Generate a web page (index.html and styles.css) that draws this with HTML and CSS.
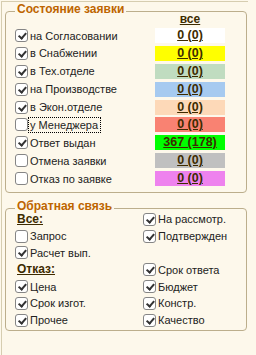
FILE: index.html
```html
<!DOCTYPE html>
<html lang="ru">
<head>
    <meta charset="UTF-8">
    <title>Состояние заявки</title>
    <link rel="stylesheet" href="styles.css">
</head>
<body>
    <div class="panel">
        <fieldset class="group">
            <legend>Состояние заявки</legend>
            <div class="state">
                <div></div>
                <div class="head">все</div>

                <label class="chk"><span class="box on"></span>на Согласовании</label>
                <div class="cnt white">0 (0)</div>

                <label class="chk"><span class="box on"></span>в Снабжении</label>
                <div class="cnt yellow">0 (0)</div>

                <label class="chk"><span class="box on"></span>в Тех.отделе</label>
                <div class="cnt sage">0 (0)</div>

                <label class="chk"><span class="box on"></span>на Производстве</label>
                <div class="cnt blue">0 (0)</div>

                <label class="chk"><span class="box on"></span>в Экон.отделе</label>
                <div class="cnt peach">0 (0)</div>

                <label class="chk"><span class="box"></span><span class="focus">у Менеджера</span></label>
                <div class="cnt salmon">0 (0)</div>

                <label class="chk"><span class="box on"></span>Ответ выдан</label>
                <div class="cnt green">367 (178)</div>

                <label class="chk"><span class="box"></span>Отмена заявки</label>
                <div class="cnt gray">0 (0)</div>

                <label class="chk"><span class="box"></span>Отказ по заявке</label>
                <div class="cnt violet">0 (0)</div>
            </div>
        </fieldset>

        <fieldset class="group">
            <legend>Обратная связь</legend>
            <div class="feedback">
                <div class="sub">Все:</div>
                <label class="chk"><span class="box on"></span>На рассмотр.</label>

                <label class="chk"><span class="box"></span>Запрос</label>
                <label class="chk"><span class="box on"></span>Подтвержден</label>

                <label class="chk"><span class="box on"></span>Расчет вып.</label>
                <div></div>

                <div class="sub">Отказ:</div>
                <label class="chk"><span class="box on"></span>Срок ответа</label>

                <label class="chk"><span class="box on"></span>Цена</label>
                <label class="chk"><span class="box on"></span>Бюджет</label>

                <label class="chk"><span class="box on"></span>Срок изгот.</label>
                <label class="chk"><span class="box on"></span>Констр.</label>

                <label class="chk"><span class="box on"></span>Прочее</label>
                <label class="chk"><span class="box on"></span>Качество</label>
            </div>
        </fieldset>
    </div>
</body>
</html>
```

FILE: styles.css
```css
body {
    margin: 0;
    background-color: #fdf8eb;
    font-family: "Liberation Sans", Arial, sans-serif;
    font-size: 11px;
    color: #222;
}

.panel {
    margin: 1px 0 0 1px;
    width: 247px;
    height: 354px;
    box-sizing: border-box;
    border-left: 1px solid #d6cdb0;
    border-top: 1px solid #d6cdb0;
    padding-left: 3px;
}

.group {
    width: 242px;
    box-sizing: border-box;
    margin: 0;
    padding: 0;
    min-width: 0;
    border: 1px solid #bcae8c;
    border-radius: 4px;
}

.group + .group {
    margin-top: 6px;
}

legend {
    margin-left: 9px;
    padding: 0 2px 5px;
    font-size: 12px;
    font-weight: bold;
    line-height: 14px;
    color: #bd6500;
}

/* состояние заявки */
.state {
    display: grid;
    grid-template-columns: 140px 70px;
    grid-template-rows: 15px;
    grid-auto-rows: 17.875px;
    margin-top: -8px;
    padding: 0 0 3px 9px;
}

.head {
    text-align: center;
    font-size: 12px;
    font-weight: bold;
    line-height: 12px;
    text-decoration: underline;
    color: #3d2b00;
}

.cnt {
    height: 15px;
    line-height: 15px;
    text-align: center;
    font-size: 12.5px;
    font-weight: bold;
    text-decoration: underline;
    color: #3d2b00;
}

.white { background: #ffffff; }
.yellow { background: #ffff00; }
.sage { background: #c0dcc0; }
.blue { background: #a6caf0; }
.peach { background: #fdd9b8; }
.salmon { background: #f98272; }
.green { background: #00ff00; }
.gray { background: #c0c0c0; }
.violet { background: #ee82ee; }

/* чекбоксы */
.chk {
    display: flex;
    align-items: center;
    height: 15px;
    white-space: nowrap;
}

.box {
    position: relative;
    flex: none;
    width: 11px;
    height: 11px;
    margin-right: 2px;
    border: 1px solid #858585;
    border-radius: 3px;
    background: #fff;
}

.box.on::after {
    content: "";
    position: absolute;
    left: 3.5px;
    top: 1px;
    width: 2.5px;
    height: 6px;
    border: solid #333;
    border-width: 0 2px 2px 0;
    transform: rotate(40deg);
}

.focus {
    outline: 1px dotted #000;
    outline-offset: 1px;
    padding-right: 1px;
}

/* обратная связь */
.feedback {
    display: grid;
    grid-template-columns: 128px 1fr;
    grid-auto-rows: 16.8px;
    margin-top: -6px;
    padding: 0 0 1px 9px;
}

.sub {
    padding-left: 2px;
    font-size: 12px;
    font-weight: bold;
    line-height: 15px;
    text-decoration: underline;
    color: #3d2b00;
}
```
